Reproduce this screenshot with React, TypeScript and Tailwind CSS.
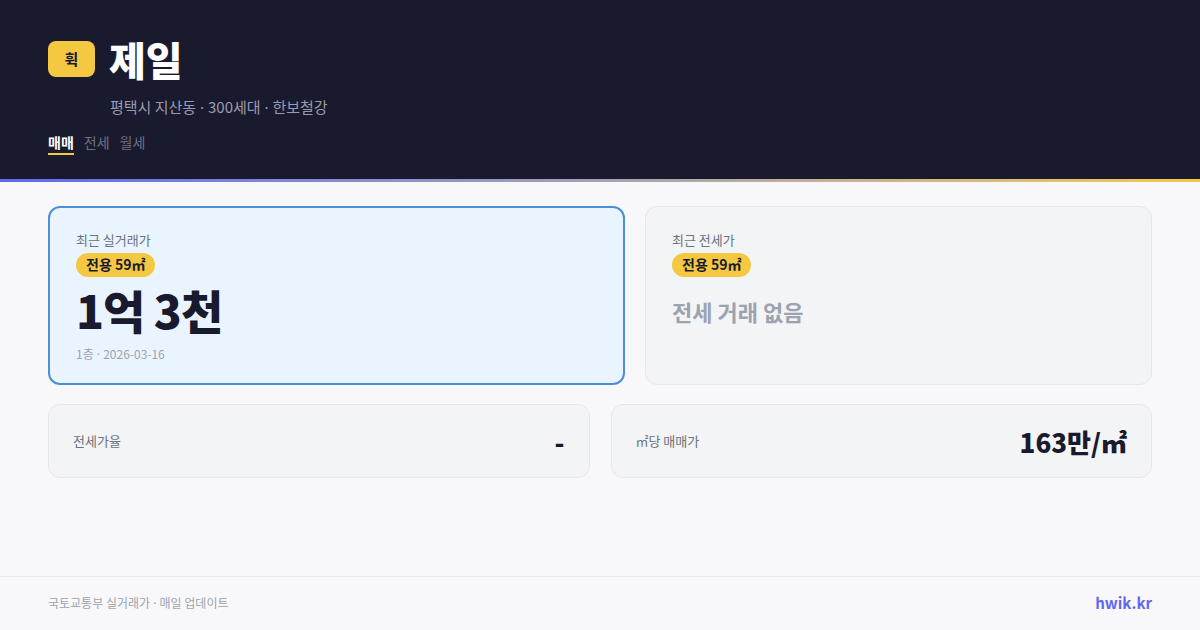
import React from "react";

const font = { fontFamily: '"Noto Sans CJK KR", "Noto Sans", sans-serif' };

const Dot = () => <span className="font-['Noto_Sans']"> · </span>;

const Badge = () => (
  <span className="inline-flex h-[24px] items-center rounded-full bg-[#f5c842] px-[10px] text-[14px] font-bold text-[#1a1a2e]">
    전용 59㎡
  </span>
);

export default function App() {
  return (
    <div
      className="flex h-[630px] w-[1200px] flex-col bg-[#f8f8fa]"
      style={font}
    >
      {/* header */}
      <div className="h-[179px] bg-[#1a1a2e] px-[48px] pt-[39px]">
        <div className="flex items-center gap-[14px]">
          <div className="flex h-[36px] w-[47px] items-center justify-center rounded-[8px] bg-[#f5c842] text-[15px] font-bold text-[#1a1a2e]">
            휙
          </div>
          <h1 className="text-[40px] leading-[40px] font-black text-white">
            제일
          </h1>
        </div>
        <div className="mt-[18px] pl-[62px] text-[15px] leading-[20px] text-[#9a9aae]">
          평택시 지산동<Dot />300세대<Dot />한보철강
        </div>
        <div className="mt-[15px] flex gap-[10px] text-[14px] leading-[20px]">
          <span className="border-b-2 border-[#f5c842] pb-[1px] font-semibold text-white">
            매매
          </span>
          <span className="text-[#6e6e82]">전세</span>
          <span className="text-[#6e6e82]">월세</span>
        </div>
      </div>
      <div className="h-[3px] bg-gradient-to-r from-[#6366f1] to-[#f5c842]" />

      {/* main */}
      <div className="flex-1 px-[48px] pt-[24px]">
        <div className="grid grid-cols-[577px_1fr] gap-[20px]">
          <div className="h-[179px] rounded-[12px] border-2 border-[#4a90d9] bg-[#eaf4ff] px-[26px] pt-[23px]">
            <div className="text-[13px] leading-[18px] text-[#6b7280]">
              최근 실거래가
            </div>
            <div className="mt-[2px]">
              <Badge />
            </div>
            <div className="mt-[6px] text-[46px] leading-[52px] font-black tracking-[-1px] text-[#1a1a2e]">
              1억 3천
            </div>
            <div className="mt-[11px] text-[12px] leading-[16px] text-[#9ca3af]">
              1층<Dot />2026-03-16
            </div>
          </div>
          <div className="h-[179px] rounded-[12px] border border-[#e5e7eb] bg-[#f3f4f6] px-[26px] pt-[24px]">
            <div className="text-[13px] leading-[18px] text-[#6b7280]">
              최근 전세가
            </div>
            <div className="mt-[2px]">
              <Badge />
            </div>
            <div className="mt-[19px] text-[22px] leading-[30px] font-bold text-[#9ca3af]">
              전세 거래 없음
            </div>
          </div>
        </div>

        <div className="mt-[19px] grid grid-cols-2 gap-[21px]">
          <div className="flex h-[74px] items-center justify-between rounded-[12px] border border-[#e5e7eb] bg-[#f3f4f6] px-[24px]">
            <span className="text-[13px] text-[#6b7280]">전세가율</span>
            <span className="text-[26px] font-black text-[#1a1a2e]">-</span>
          </div>
          <div className="flex h-[74px] items-center justify-between rounded-[12px] border border-[#e5e7eb] bg-[#f3f4f6] px-[24px]">
            <span className="text-[13px] text-[#6b7280]">㎡당 매매가</span>
            <span className="text-[26px] font-black text-[#1a1a2e]">
              163만/㎡
            </span>
          </div>
        </div>
      </div>

      {/* footer */}
      <div className="flex h-[54px] items-center justify-between border-t border-[#e5e7eb] px-[48px]">
        <span className="text-[12px] text-[#9ca3af]">
          국토교통부 실거래가<Dot />매일 업데이트
        </span>
        <span className="text-[15px] font-bold text-[#6366f1]">hwik.kr</span>
      </div>
    </div>
  );
}
